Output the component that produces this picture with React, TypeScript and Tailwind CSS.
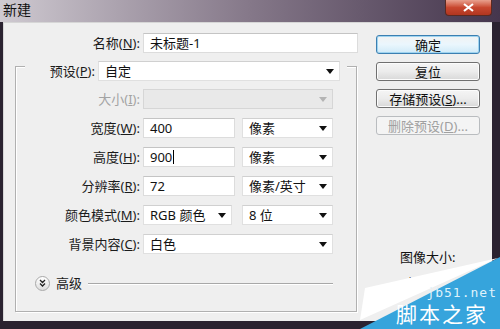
import React from 'react';

const font = { fontFamily: '"Noto Sans", "Noto Sans CJK SC", sans-serif' };

function Label({ text, k, width, disabled }: { text: string; k: string; width: string; disabled?: boolean }) {
  return (
    <div className={`${width} text-right shrink-0 ${disabled ? 'text-[#a3a3a3]' : 'text-[#1b1b1b]'}`}>
      {text}(<u>{k}</u>):
    </div>
  );
}

function Field({ value, width, caret }: { value: string; width: string; caret?: boolean }) {
  return (
    <div className={`${width} h-[20px] bg-white border border-[#dcdcdc] border-t-[#c4c4c4] flex items-center pl-[6px] text-[#111]`}>
      {value}
      {caret && <span className="w-px h-[14px] bg-black ml-px" />}
    </div>
  );
}

function Select({ value, width, disabled }: { value?: string; width: string; disabled?: boolean }) {
  return (
    <div
      className={`${width} h-[20px] flex items-center justify-between pl-[6px] pr-[5px] border ${
        disabled ? 'bg-[#e9e9e9] border-[#d6d6d6]' : 'bg-white border-[#e0e0e0] border-t-[#d0d0d0]'
      } text-[#111]`}
    >
      <span>{value}</span>
      <svg width="8" height="5" viewBox="0 0 8 5">
        <path d="M0 0h8L4 5z" fill={disabled ? '#b4b4b4' : '#111'} />
      </svg>
    </div>
  );
}

function Button({ children, primary, disabled }: { children: React.ReactNode; primary?: boolean; disabled?: boolean }) {
  const cls = disabled
    ? 'border-[#b9bcbf] text-[#a0a0a0] bg-[#f4f4f4]'
    : primary
    ? 'border-[#3c7fb1] text-[#111] bg-gradient-to-b from-[#f2f2f2] via-[#eaf6fd] to-[#d0eaf8] shadow-[inset_0_0_0_1px_#9fd4f0]'
    : 'border-[#707070] text-[#111] bg-gradient-to-b from-[#f5f5f5] via-[#ececec] to-[#d8d8d8] shadow-[inset_0_0_0_1px_#fcfcfc]';
  return (
    <div className={`w-[104px] h-[19px] rounded-[3px] border flex items-center justify-center ${cls}`}>{children}</div>
  );
}

export default function App() {
  return (
    <div className="w-[500px] h-[329px] bg-[#2a2230] flex flex-col overflow-hidden relative text-[13px] leading-[18px]" style={font}>
      {/* title bar */}
      <div className="h-[22px] flex justify-between bg-gradient-to-r from-[#cfcad1] via-[#857889] to-[#45364d]">
        <span className="pl-[3px] pt-[1px] text-[#111] text-[14px]">新建</span>
        <div className="w-[47px] h-[16px] mr-[8px] rounded-b-[4px] border border-t-0 border-[#5a2a22] bg-gradient-to-b from-[#e8a08e] via-[#c8472f] to-[#b13620] flex items-center justify-center">
          <svg width="11" height="9" viewBox="0 0 11 9">
            <path d="M1 1l9 7M10 1L1 8" stroke="#fff" strokeWidth="2.2" />
          </svg>
        </div>
      </div>

      {/* body */}
      <div className="ml-[3px] mr-[8px] h-[299px] bg-[#efefef] border-l border-t border-[#d6d6d6] flex">
        <div className="w-[356px] flex flex-col pt-[10px]">
          <div className="flex items-center gap-[3px]">
            <Label text="名称" k="N" width="w-[136px]" />
            <Field value="未标题-1" width="w-[215px]" />
          </div>

          <div className="mt-[13px] ml-[11px] w-[342px] h-[246px] border border-[#b0b0b0] shadow-[1px_1px_0_#fff,inset_1px_1px_0_#fff] flex flex-col">
            <div className="-mt-[6px] mx-[9px] bg-[#efefef] flex items-center gap-[3px]">
              <Label text="预设" k="P" width="w-[70px]" />
              <Select value="自定" width="w-[242px]" />
            </div>

            <div className="mt-[8px] flex flex-col gap-[9px]">
              <div className="flex items-center gap-[3px]">
                <Label text="大小" k="I" width="w-[124px]" disabled />
                <Select width="w-[190px]" disabled />
              </div>
              <div className="flex items-center">
                <Label text="宽度" k="W" width="w-[124px] mr-[3px]" />
                <Field value="400" width="w-[92px]" />
                <div className="ml-[7px]"><Select value="像素" width="w-[91px]" /></div>
              </div>
              <div className="flex items-center">
                <Label text="高度" k="H" width="w-[124px] mr-[3px]" />
                <Field value="900" width="w-[92px]" caret />
                <div className="ml-[7px]"><Select value="像素" width="w-[91px]" /></div>
              </div>
              <div className="flex items-center">
                <Label text="分辨率" k="R" width="w-[124px] mr-[3px]" />
                <Field value="72" width="w-[92px]" />
                <div className="ml-[7px]"><Select value="像素/英寸" width="w-[91px]" /></div>
              </div>
              <div className="flex items-center">
                <Label text="颜色模式" k="M" width="w-[124px] mr-[3px]" />
                <Select value="RGB 颜色" width="w-[89px]" />
                <div className="ml-[10px]"><Select value="8 位" width="w-[91px]" /></div>
              </div>
              <div className="flex items-center">
                <Label text="背景内容" k="C" width="w-[124px] mr-[3px]" />
                <Select value="白色" width="w-[190px]" />
              </div>
            </div>

            <div className="mt-[20px] ml-[19px] flex items-center">
              <div className="w-[15px] h-[15px] rounded-full border border-[#a9a9a9] bg-gradient-to-b from-white to-[#dedede] flex items-center justify-center">
                <svg width="7" height="8" viewBox="0 0 7 8">
                  <path d="M1 1l2.5 2.5L6 1M1 4.5L3.5 7L6 4.5" stroke="#222" strokeWidth="1.3" fill="none" />
                </svg>
              </div>
              <span className="ml-[6px] text-[#1b1b1b]">高级</span>
              <div className="ml-[6px] w-[245px] h-px bg-[#a8a8a8] shadow-[0_1px_0_#fff]" />
            </div>
          </div>
        </div>

        <div className="ml-[16px] pt-[12px] flex flex-col gap-[8px]">
          <Button primary>确定</Button>
          <Button>复位</Button>
          <Button>
            存储预设(<u>S</u>)...
          </Button>
          <Button disabled>
            删除预设(<u>D</u>)...
          </Button>
          <div className="mt-[105px] ml-[24px] text-[#111]">图像大小:</div>
          <div className="ml-[33px] -mt-[2px] text-[#111] text-[10px]">'</div>
        </div>
      </div>

      {/* watermark */}
      <div className="absolute right-0 bottom-0 w-[145px] h-[74px]">
        <svg width="145" height="74" viewBox="0 0 145 74" className="absolute inset-0">
          <path d="M5 74L145 2V74z" fill="#36a4dc" />
          <path d="M10 33L143 3L5 65z" fill="#fff" />
        </svg>
        <div className="absolute right-[3px] top-[31px] text-[13px] leading-[13px] text-[#dff2fb] tracking-[1px]" style={{ fontFamily: '"DejaVu Sans Mono", monospace' }}>
          jb51.net
        </div>
        <div className="absolute right-[12px] top-[48px] text-[21px] leading-[22px] text-white tracking-[2px]">脚本之家</div>
      </div>
    </div>
  );
}
